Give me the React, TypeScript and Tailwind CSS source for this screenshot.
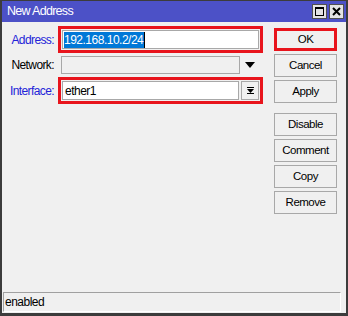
import React from 'react';

const buttons = ['OK', 'Cancel', 'Apply', 'Disable', 'Comment', 'Copy', 'Remove'];

function TitleButton({ kind }: { kind: 'max' | 'close' }) {
  return (
    <div className="w-[15px] h-[15px] bg-[#e3e3e3] border border-[#505050] flex items-center justify-center">
      {kind === 'max' ? (
        <div className="w-[9px] h-[9px] border border-black border-t-2" />
      ) : (
        <svg width="9" height="9" viewBox="0 0 9 9">
          <path d="M1 1 L8 8 M8 1 L1 8" stroke="black" strokeWidth="2" />
        </svg>
      )}
    </div>
  );
}

function DropIcon() {
  return (
    <svg width="9" height="9" viewBox="0 0 9 9">
      <rect x="1" y="1" width="7" height="1" fill="black" />
      <path d="M1 3 H8 L4.5 7 Z" fill="black" />
      <rect x="1" y="7" width="7" height="1" fill="black" />
    </svg>
  );
}

export default function App() {
  return (
    <div className="w-[348px] h-[316px] flex flex-col bg-[#f0f0f0] border-[#3c3c3c] border-l-2 border-r-2 border-t border-b-[3px] font-['Liberation_Sans',Arial,sans-serif] text-black select-none">
      <div className="h-[21px] bg-[#4c51c7] flex items-center justify-between pl-[5px] pr-[2px]">
        <span className="text-white text-[12.5px] tracking-[-0.7px]">New Address</span>
        <div className="flex gap-[2px]">
          <TitleButton kind="max" />
          <TitleButton kind="close" />
        </div>
      </div>

      <div className="flex-1 flex">
        <div className="pt-[4px] flex flex-col gap-[3px]">
          <div className="flex items-center h-[27px]">
            <span className="w-[52px] text-right text-[12px] tracking-[-0.6px] text-[#2323d8]">Address:</span>
            <div className="ml-[4px] w-[205px] h-[27px] border-[3px] border-[#e8141c] p-[1px]">
              <div className="h-full bg-white border border-[#a8a8a8] flex items-center pl-[1px]">
                <span className="bg-[#0078d7] text-white text-[12px] tracking-[-0.5px] leading-[16px] pr-[1px] border-r border-black">
                  192.168.10.2/24
                </span>
              </div>
            </div>
          </div>

          <div className="flex items-center h-[18px]">
            <span className="w-[52px] text-right text-[12px] tracking-[-0.6px]">Network:</span>
            <div className="ml-[7px] w-[179px] h-[18px] border border-[#a8a8a8] bg-[#f0f0f0]" />
            <svg className="ml-[5px]" width="10" height="6" viewBox="0 0 10 6">
              <path d="M0 0 H10 L5 6 Z" fill="black" />
            </svg>
          </div>

          <div className="flex items-center h-[27px]">
            <span className="w-[52px] text-right text-[12px] tracking-[-0.6px] text-[#2323d8]">Interface:</span>
            <div className="ml-[4px] w-[205px] h-[27px] border-[3px] border-[#e8141c] p-[1px] flex gap-[2px]">
              <div className="flex-1 bg-white border border-[#a8a8a8] flex items-center pl-[2px] text-[12px] tracking-[-0.5px]">
                ether1
              </div>
              <div className="w-[18px] border border-[#a8a8a8] flex items-center justify-center">
                <DropIcon />
              </div>
            </div>
          </div>
        </div>

        <div className="ml-[11px] pt-[6px] flex flex-col gap-[3px]">
          {buttons.map(b => (
            <div
              key={b}
              className={`w-[63px] h-[23px] flex items-center justify-center text-[11.5px] tracking-[-0.5px] ${
                b === 'OK' ? 'border-[3px] border-[#e8141c]' : 'border border-[#a8a8a8]'
              } ${b === 'Disable' ? 'mt-[7px]' : ''}`}
            >
              {b}
            </div>
          ))}
        </div>
      </div>

      <div className="ml-[1px] mr-[5px] mb-[1px] h-[20px] border-t border-l border-[#a0a0a0] border-r-white border-b-white border-r border-b flex items-center pl-[1px] text-[12px] tracking-[-0.5px]">
        enabled
      </div>
    </div>
  );
}
